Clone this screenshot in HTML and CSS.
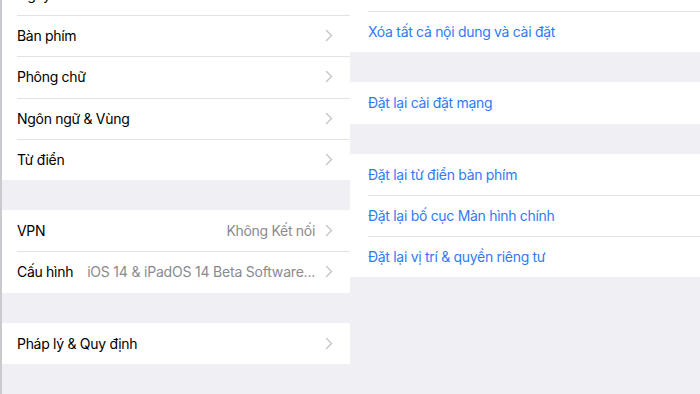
FILE: index.html
```html
<!DOCTYPE html>
<html lang="vi">
<head>
<meta charset="utf-8">
<link rel="stylesheet" href="styles.css">
</head>
<body>
<div class="screen">
  <div class="pane pane-left">
    <div class="offset-left">
      <div class="group">
        <div class="row"><span class="label">Ngày &amp; Giờ</span><svg class="chev" viewBox="0 0 8 13"><polyline points="1.5,1.5 6.5,6.5 1.5,11.5"/></svg></div>
        <div class="row"><span class="label">Bàn phím</span><svg class="chev" viewBox="0 0 8 13"><polyline points="1.5,1.5 6.5,6.5 1.5,11.5"/></svg></div>
        <div class="row"><span class="label">Phông chữ</span><svg class="chev" viewBox="0 0 8 13"><polyline points="1.5,1.5 6.5,6.5 1.5,11.5"/></svg></div>
        <div class="row"><span class="label">Ngôn ngữ &amp; Vùng</span><svg class="chev" viewBox="0 0 8 13"><polyline points="1.5,1.5 6.5,6.5 1.5,11.5"/></svg></div>
        <div class="row"><span class="label">Từ điển</span><svg class="chev" viewBox="0 0 8 13"><polyline points="1.5,1.5 6.5,6.5 1.5,11.5"/></svg></div>
      </div>
      <div class="group">
        <div class="row"><span class="label">VPN</span><span class="value">Không Kết nối</span><svg class="chev" viewBox="0 0 8 13"><polyline points="1.5,1.5 6.5,6.5 1.5,11.5"/></svg></div>
        <div class="row"><span class="label">Cấu hình</span><span class="value value-wide">iOS 14 &amp; iPadOS 14 Beta Software...</span><svg class="chev" viewBox="0 0 8 13"><polyline points="1.5,1.5 6.5,6.5 1.5,11.5"/></svg></div>
      </div>
      <div class="group">
        <div class="row"><span class="label">Pháp lý &amp; Quy định</span><svg class="chev" viewBox="0 0 8 13"><polyline points="1.5,1.5 6.5,6.5 1.5,11.5"/></svg></div>
      </div>
    </div>
  </div>
  <div class="pane pane-right">
    <div class="offset-right">
      <div class="group">
        <div class="row action"></div>
        <div class="row action"><span class="label">Xóa tất cả nội dung và cài đặt</span></div>
      </div>
      <div class="group">
        <div class="row action"><span class="label">Đặt lại cài đặt mạng</span></div>
      </div>
      <div class="group">
        <div class="row action"><span class="label">Đặt lại từ điển bàn phím</span></div>
        <div class="row action"><span class="label">Đặt lại bố cục Màn hình chính</span></div>
        <div class="row action"><span class="label">Đặt lại vị trí &amp; quyền riêng tư</span></div>
      </div>
    </div>
  </div>
</div>
</body>
</html>
```

FILE: styles.css
```css
* { box-sizing: border-box; }
html, body { margin: 0; padding: 0; }
body {
  width: 700px;
  height: 394px;
  overflow: hidden;
  background: #efeff4;
  font-family: Inter, "Noto Sans", sans-serif;
  font-size: 14px;
  letter-spacing: -0.3px;
  color: #000;
  -webkit-font-smoothing: antialiased;
}
.screen {
  display: flex;
  height: 394px;
  overflow: hidden;
}
.pane {
  height: 394px;
  overflow: hidden;
  background: #efeff4;
}
.pane-left {
  width: 350px;
  border-left: 2px solid #c9c9ce;
}
.pane-right {
  width: 350px;
}
.offset-left { margin-top: -26.25px; }
.offset-right { margin-top: -30.25px; }
.group {
  background: #fff;
  margin-bottom: 30px;
}
.row {
  position: relative;
  height: 41.25px;
  display: flex;
  align-items: center;
  padding: 0 17px 0 15px;
}
.pane-right .row { padding-left: 18px; }
.row + .row::before {
  content: "";
  position: absolute;
  top: 0;
  left: 15px;
  right: 0;
  height: 1px;
  background: #e3e3e6;
}
.pane-right .row + .row::before { left: 18px; }
.label {
  flex: 0 0 auto;
  white-space: nowrap;
}
.value {
  flex: 1 1 auto;
  text-align: right;
  color: #8a8a8f;
  white-space: nowrap;
  margin: 0 10px 0 14px;
}
.value-wide { letter-spacing: -0.2px; }
.chev {
  flex: 0 0 auto;
  margin-left: auto;
  width: 8px;
  height: 13px;
  fill: none;
  stroke: #c4c4c9;
  stroke-width: 1.4;
  stroke-linecap: round;
  stroke-linejoin: round;
}
.value + .chev { margin-left: 0; }
.action .label { color: #2f7bf5; }
```
